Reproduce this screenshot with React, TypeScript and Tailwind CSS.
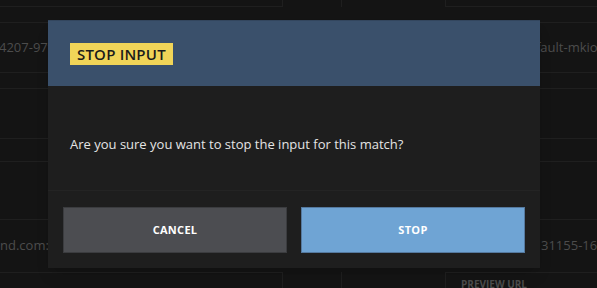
import React from "react";

const font = { fontFamily: '"Open Sans", "Noto Sans", sans-serif' };

// faint table behind the dialog
function Backdrop() {
  return (
    <div className="absolute inset-0 bg-[#141414] text-[#4c4c4c] text-[13px] overflow-hidden">
      <div className="h-[7px] grid grid-cols-[283px_59px_103px_1fr]">
        <div className="border-b border-r border-[#1f1f1f]" />
        <div className="border-r border-[#1f1f1f]" />
        <div />
        <div className="border-b border-l border-[#1f1f1f]" />
      </div>
      <div className="h-[16px] border-b border-[#1f1f1f]" />
      <div className="h-[50px] border-b border-[#1f1f1f] flex items-center relative">
        <span className="absolute left-[-1px] whitespace-nowrap">4207-97f1</span>
        <span className="absolute left-[536px] whitespace-nowrap">fault-mkiop</span>
      </div>
      <div className="h-[16px] border-b border-[#1f1f1f]" />
      <div className="h-[50px] border-b border-[#1f1f1f]" />
      <div className="h-[23px] border-b border-[#1f1f1f]" />
      <div className="h-[58px] border-b border-[#1f1f1f]" />
      <div className="h-[52px] flex items-center relative">
        <span className="absolute left-0 whitespace-nowrap">nd.com:1935</span>
        <span className="absolute left-[541px] whitespace-nowrap">31155-1668</span>
      </div>
      <div className="grid grid-cols-[283px_59px_103px_1fr] h-[20px]">
        <div className="border-t border-r border-[#1f1f1f]" />
        <div className="border-r border-[#1f1f1f]" />
        <div />
        <div className="border-t border-l border-[#1f1f1f] pl-[15px] pt-[6px] text-[10px] font-bold leading-none">
          PREVIEW URL
        </div>
      </div>
    </div>
  );
}

export default function App() {
  return (
    <div className="relative w-[597px] h-[288px] overflow-hidden" style={font}>
      <Backdrop />
      <div className="absolute left-[48px] top-[20px] w-[492px] bg-[#1e1e1e] shadow-lg">
        <div className="h-[66px] bg-[#3a506b] border-t border-[#33465e] flex items-center px-[22px]">
          <span className="bg-[#f1d558] text-[#1b1b1b] text-[15px] font-semibold leading-[22px] px-[7px] tracking-[0.2px]">
            STOP INPUT
          </span>
        </div>
        <div className="h-[104px] flex items-center px-[22px] pt-[14px]">
          <p className="text-[13px] text-[#e4e4e4]">
            Are you sure you want to stop the input for this match?
          </p>
        </div>
        <div className="border-t border-[#242424] px-[15px] pt-[16px] pb-[15px] grid grid-cols-2 gap-[14px]">
          <button className="h-[46px] bg-[#4c4d51] border border-[#3b3c3f] text-white text-[11px] font-bold tracking-[0.3px]">
            CANCEL
          </button>
          <button className="h-[46px] bg-[#6fa4d4] border border-[#55799f] text-white text-[11px] font-bold tracking-[0.3px]">
            STOP
          </button>
        </div>
      </div>
    </div>
  );
}
